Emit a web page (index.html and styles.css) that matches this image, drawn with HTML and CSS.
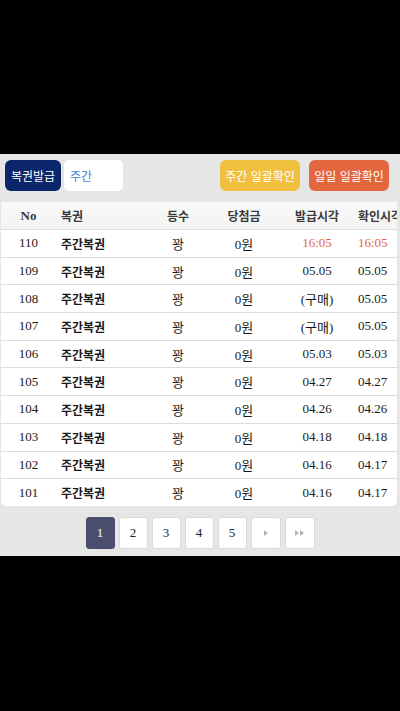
FILE: index.html
```html
<!DOCTYPE html>
<html lang="ko">
<head>
<meta charset="utf-8">
<link rel="stylesheet" href="styles.css">
</head>
<body>
<div class="top"></div>
<main class="content">
  <div class="toolbar">
    <div class="left-group">
      <button class="btn btn-navy">복권발급</button>
      <div class="select">주간</div>
    </div>
    <div class="right-group">
      <button class="btn btn-yellow">주간 일괄확인</button>
      <button class="btn btn-red">일일 일괄확인</button>
    </div>
  </div>
  <div class="table-wrap">
    <table class="list">
      <colgroup>
        <col class="c-no"><col class="c-name"><col class="c-rank"><col class="c-prize"><col class="c-issue"><col class="c-check">
      </colgroup>
      <thead>
        <tr><th class="no">No</th><th class="name">복권</th><th>등수</th><th>당첨금</th><th>발급시각</th><th class="check">확인시각</th></tr>
      </thead>
      <tbody>
        <tr><td class="no">110</td><td class="name">주간복권</td><td>꽝</td><td>0원</td><td class="hl">16:05</td><td class="check hl">16:05</td></tr>
        <tr><td class="no">109</td><td class="name">주간복권</td><td>꽝</td><td>0원</td><td>05.05</td><td class="check">05.05</td></tr>
        <tr><td class="no">108</td><td class="name">주간복권</td><td>꽝</td><td>0원</td><td>(구매)</td><td class="check">05.05</td></tr>
        <tr><td class="no">107</td><td class="name">주간복권</td><td>꽝</td><td>0원</td><td>(구매)</td><td class="check">05.05</td></tr>
        <tr><td class="no">106</td><td class="name">주간복권</td><td>꽝</td><td>0원</td><td>05.03</td><td class="check">05.03</td></tr>
        <tr><td class="no">105</td><td class="name">주간복권</td><td>꽝</td><td>0원</td><td>04.27</td><td class="check">04.27</td></tr>
        <tr><td class="no">104</td><td class="name">주간복권</td><td>꽝</td><td>0원</td><td>04.26</td><td class="check">04.26</td></tr>
        <tr><td class="no">103</td><td class="name">주간복권</td><td>꽝</td><td>0원</td><td>04.18</td><td class="check">04.18</td></tr>
        <tr><td class="no">102</td><td class="name">주간복권</td><td>꽝</td><td>0원</td><td>04.16</td><td class="check">04.17</td></tr>
        <tr><td class="no">101</td><td class="name">주간복권</td><td>꽝</td><td>0원</td><td>04.16</td><td class="check">04.17</td></tr>
      </tbody>
    </table>
  </div>
  <nav class="pager">
    <a class="page active">1</a>
    <a class="page">2</a>
    <a class="page">3</a>
    <a class="page">4</a>
    <a class="page">5</a>
    <a class="page arrow"><svg width="8" height="8" viewBox="0 0 8 8"><path d="M2 1 L6 4 L2 7 Z" fill="#b5b5b5"/></svg></a>
    <a class="page arrow"><svg width="12" height="8" viewBox="0 0 12 8"><path d="M1 1 L5 4 L1 7 Z M6 1 L10 4 L6 7 Z" fill="#b5b5b5"/></svg></a>
  </nav>
</main>
</body>
</html>
```
FILE: styles.css
```css
html, body {
  margin: 0;
  padding: 0;
  background: #000;
}
body {
  width: 400px;
  height: 711px;
  overflow: hidden;
  font-family: "Liberation Serif", "Noto Sans CJK KR", serif;
  font-size: 12px;
  color: #1a1a1a;
}
.top {
  height: 154px;
  background: #000;
}
.content {
  background: #e6e6e6;
  padding: 6px 0 7px;
}
.toolbar {
  display: flex;
  justify-content: space-between;
  align-items: center;
  padding: 0 11px 0 5px;
  height: 31px;
}
.left-group, .right-group {
  display: flex;
  gap: 3px;
  height: 31px;
}
.right-group {
  gap: 9px;
}
.btn {
  border: none;
  border-radius: 6px;
  color: #fff;
  font-family: "Noto Sans CJK KR", sans-serif;
  font-size: 12px;
  padding: 0;
  height: 31px;
  line-height: 31px;
}
.btn-navy {
  background: #0b266a;
  width: 56px;
}
.btn-yellow {
  background: #f1c03f;
  width: 80px;
}
.btn-red {
  background: #e2673f;
  width: 80px;
}
.select {
  background: #fff;
  border-radius: 5px;
  width: 53px;
  padding-left: 6px;
  color: #3f7fd9;
  font-family: "Noto Sans CJK KR", sans-serif;
  font-size: 12px;
  line-height: 31px;
}
.table-wrap {
  margin: 11px 3px 0 1px;
  background: #fff;
  border-radius: 0 0 5px 5px;
  overflow: hidden;
}
.list {
  border-collapse: collapse;
  table-layout: fixed;
  width: 412px;
}
.c-no { width: 55px; }
.c-name { width: 95px; }
.c-rank { width: 54px; }
.c-prize { width: 78px; }
.c-issue { width: 68px; }
.c-check { width: 62px; }
.list th, .list td {
  padding: 0;
  text-align: center;
  white-space: nowrap;
  overflow: hidden;
}
.list th {
  height: 27px;
  border-bottom: 1px solid #dcdcdc;
  background: linear-gradient(#fafafa, #f3f3f3);
  font-family: "Noto Sans CJK KR", sans-serif;
  font-weight: bold;
  color: #3a3a3a;
  font-size: 12px;
}
.list th.no {
  font-family: "Liberation Serif", serif;
  font-size: 13px;
}
.list td {
  height: 26.7px;
  border-bottom: 1px solid #dcdcdc;
  font-size: 13px;
}
.list tbody tr:last-child td {
  border-bottom: none;
}
.list .name {
  text-align: left;
  padding-left: 5px;
}
.list td.name {
  font-family: "Noto Sans CJK KR", sans-serif;
  font-weight: bold;
  font-size: 12px;
}
.list .check {
  text-align: left;
  padding-left: 7px;
}
.list .hl {
  color: #e2643b;
}
.pager {
  display: flex;
  justify-content: center;
  gap: 4px;
  margin-top: 11px;
}
.page {
  box-sizing: border-box;
  width: 29px;
  height: 32px;
  border: 1px solid #dadada;
  border-radius: 3px;
  background: #fff;
  display: flex;
  align-items: center;
  justify-content: center;
  font-size: 13px;
  color: #222;
}
.page.active {
  background: #4b4d6e;
  border-color: #4b4d6e;
  color: #fff;
}
.page.arrow {
  width: 30px;
}
```
